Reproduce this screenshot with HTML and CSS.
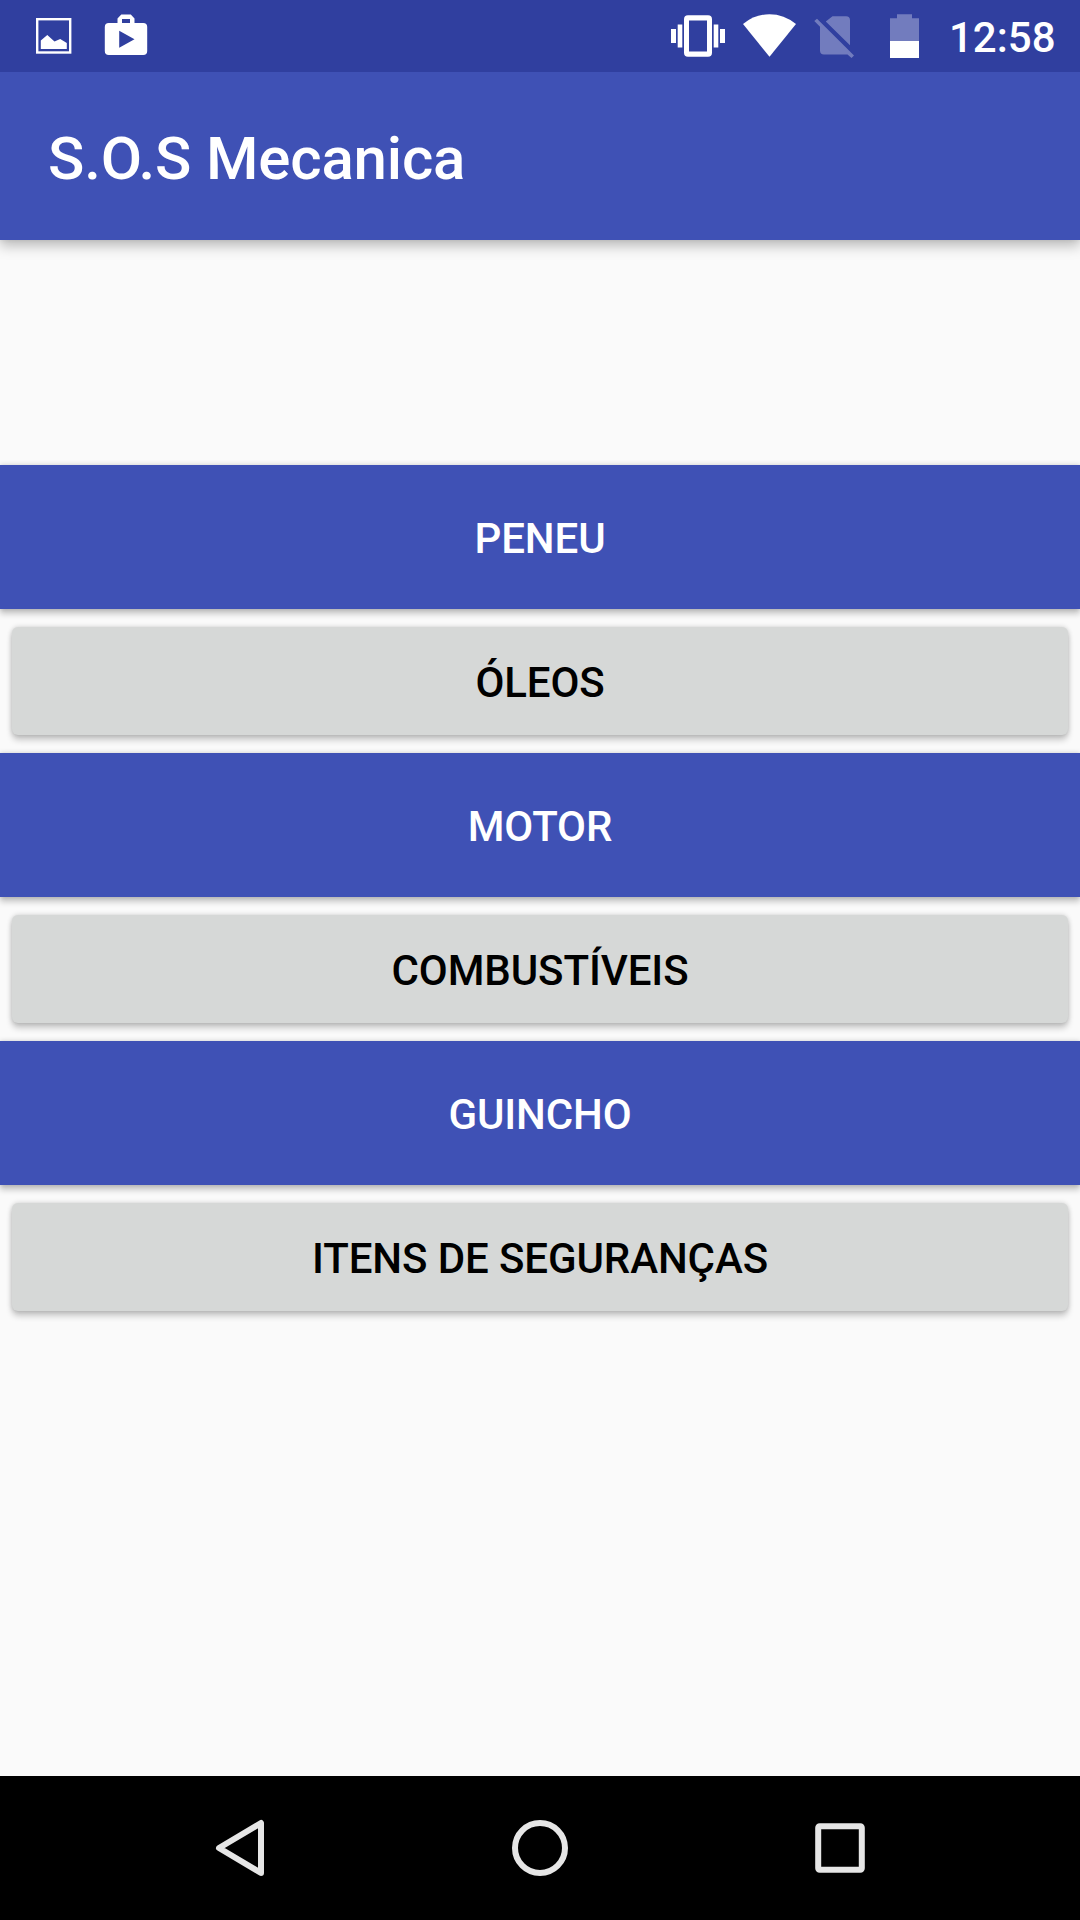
FILE: index.html
```html
<!DOCTYPE html>
<html lang="pt-BR">
<head>
<meta charset="utf-8">
<title>S.O.S Mecanica</title>
<link rel="stylesheet" href="styles.css">
</head>
<body>
<div class="screen">
  <header class="status-bar">
    <svg width="180" height="72" viewBox="0 0 180 72">
      <rect x="37.200" y="19.200" width="33" height="33.300" fill="none" stroke="#fff" stroke-width="2.400"/>
      <path fill="#fff" d="M40.800 40.500l6.500-5.500 7.200 6.600 5.700-2.700 6.600 4V49H40.800z"/>
      <path fill="#fff" fill-rule="evenodd" d="M117.500 23v-4.500l3.800-4h9.500l3.700 4V23h8.700a4 4 0 0 1 4 4v24a4 4 0 0 1-4 4h-34.400a4 4 0 0 1-4-4V27a4 4 0 0 1 4-4zM122 19v4h8v-4zM119.200 30.800v17L134.500 39.300z"/>
    </svg>
    <div class="status-right">
      <svg width="290" height="72" viewBox="650 0 290 72">
        <g fill="#fff">
          <path d="M671 29h5v14h-5zM677.700 24.500h4.600v23h-4.600zM713.700 24.500h4.600v23h-4.600zM720 29h5v14h-5z"/>
          <path fill-rule="evenodd" d="M688 15.200h20a4 4 0 0 1 4 4v33.600a4 4 0 0 1-4 4h-20a4 4 0 0 1-4-4V19.200a4 4 0 0 1 4-4zM689 20.500v31h18v-31z"/>
          <path d="M743 24Q755 14.200 769.500 14.200T796 24L769.500 56.700z"/>
          <path d="M890 41h29v17h-29z"/>
        </g>
        <g fill="#fff" fill-opacity=".32">
          <path d="M832.500 16.300H846a4 4 0 0 1 4 4V45.300L825.800 21.500zM817 18.700L854 55.500l-2.500 2.500-4-3.600H824a4 4 0 0 1-4-4V26.700L814.300 21z"/>
          <path d="M897 14.200h15v4h7V41h-29V18.200h7z"/>
        </g>
      </svg>
      <span class="clock">12:58</span>
    </div>
  </header>
  <div class="app-bar"><h1>S.O.S Mecanica</h1></div>
  <main class="menu">
    <button class="item primary">PENEU</button>
    <button class="item neutral">ÓLEOS</button>
    <button class="item primary">MOTOR</button>
    <button class="item neutral">COMBUSTÍVEIS</button>
    <button class="item primary">GUINCHO</button>
    <button class="item neutral">ITENS DE SEGURANÇAS</button>
  </main>
  <nav class="nav-bar">
    <svg viewBox="0 0 72 72"><path d="M57 11v50L15 36z"/></svg>
    <svg viewBox="0 0 72 72"><circle cx="36" cy="36" r="25"/></svg>
    <svg viewBox="0 0 72 72"><rect x="14.200" y="14.200" width="43.600" height="43.600" rx="1.500"/></svg>
  </nav>
</div>
</body>
</html>
```
FILE: styles.css
```css
* { box-sizing: border-box; }
body { margin: 0; font-family: Roboto, sans-serif; font-weight: 500; }
.screen {
  width: 1080px;
  height: 1920px;
  display: flex;
  flex-direction: column;
  background: #fafafa;
  overflow: hidden;
}
svg { display: block; }
.status-bar {
  height: 72px;
  flex: none;
  display: flex;
  justify-content: space-between;
  background: #303f9f;
  color: #fff;
}
.status-right { display: flex; width: 430px; }
.clock { padding-left: 9px; font-size: 42px; line-height: 75px; white-space: nowrap; }
.app-bar {
  height: 168px;
  flex: none;
  display: flex;
  align-items: center;
  padding: 6px 48px 0;
  background: #3f51b5;
  color: #fff;
  box-shadow: 0 6px 12px rgba(0, 0, 0, .25), 0 0 5px rgba(0, 0, 0, .08);
  clip-path: inset(0 0 -30px 0);
}
h1 { margin: 0; font-size: 60px; font-weight: 500; line-height: 70px; letter-spacing: -.17px; }
.menu {
  flex: 1;
  display: flex;
  flex-direction: column;
  padding-top: 225px;
}
.item {
  border: 0;
  flex: none;
  font: 500 42px/50px Roboto, sans-serif;
  letter-spacing: -.1px;
  text-align: center;
  box-shadow: 0 5px 6px rgba(0, 0, 0, .2), 0 0 5px rgba(0, 0, 0, .18);
}
.primary { height: 144px; padding: 3px 0 0; background: #3f51b5; color: #fff; }
.neutral { height: 108px; margin: 18px 12px; padding: 3px 0 0; border-radius: 6px; background: #d6d8d7; color: #000; }
.nav-bar {
  height: 144px;
  flex: none;
  display: flex;
  align-items: center;
  justify-content: center;
  gap: 228px;
  background: #000;
}
.nav-bar svg { width: 72px; height: 72px; fill: none; stroke: #e6e6e6; stroke-width: 6; stroke-linejoin: round; }
```
